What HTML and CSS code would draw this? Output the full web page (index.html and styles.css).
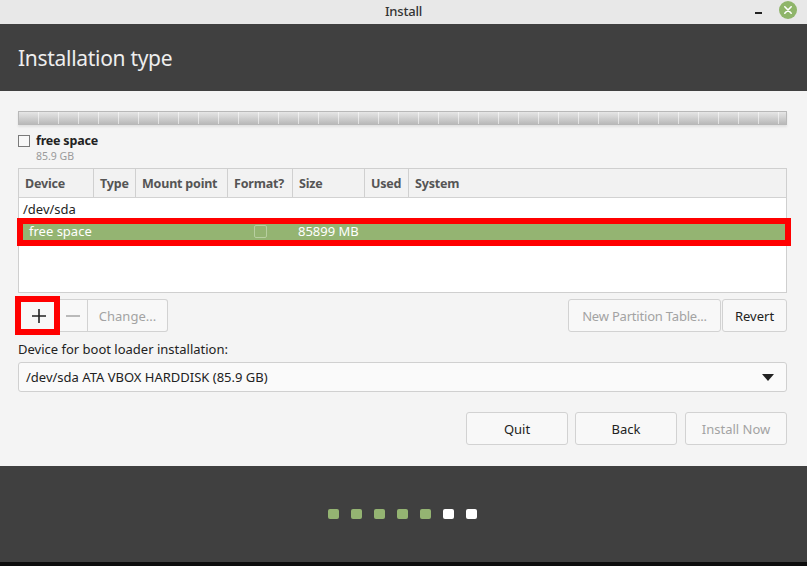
FILE: index.html
```html
<!DOCTYPE html>
<html>
<head>
<meta charset="utf-8">
<link rel="stylesheet" href="styles.css">
</head>
<body>
<div class="window">
  <div class="titlebar">
    <span class="title">Install</span>
    <div class="wm">
      <span class="minimize"></span>
      <span class="close">
        <svg width="18" height="18" viewBox="0 0 18 18"><circle cx="9" cy="9" r="9" fill="#8fb56a"/><path d="M5.8 5.8 L12.2 12.2 M12.2 5.8 L5.8 12.2" stroke="#fff" stroke-width="1.6" stroke-linecap="round"/></svg>
      </span>
    </div>
  </div>
  <div class="header"><h1>Installation type</h1></div>
  <div class="content">
    <div class="diskbar"></div>
    <div class="legend">
      <span class="legend-box"></span>
      <div class="legend-text">
        <div class="legend-name">free space</div>
        <div class="legend-size">85.9 GB</div>
      </div>
    </div>
    <div class="table">
      <div class="thead">
        <div class="th c1">Device</div>
        <div class="th c2">Type</div>
        <div class="th c3">Mount point</div>
        <div class="th c4">Format?</div>
        <div class="th c5">Size</div>
        <div class="th c6">Used</div>
        <div class="th c7">System</div>
      </div>
      <div class="row device-row"><span class="dev">/dev/sda</span></div>
      <div class="row part-row">
        <span class="part-name">free space</span>
        <span class="part-check"></span>
        <span class="part-size">85899 MB</span>
      </div>
      <div class="highlight row-hl"></div>
    </div>
    <div class="toolbar">
      <div class="group">
        <button class="btn icon-btn plus">
          <svg width="14" height="14" viewBox="0 0 14 14"><path d="M7 0 V14 M0 7 H14" stroke="#222" stroke-width="1.6"/></svg>
        </button>
        <button class="btn icon-btn minus">
          <svg width="14" height="14" viewBox="0 0 14 14"><path d="M0 7 H14" stroke="#aaa" stroke-width="1.6"/></svg>
        </button>
        <button class="btn change disabled">Change...</button>
        <div class="highlight plus-hl"></div>
      </div>
      <div class="group right">
        <button class="btn newtable disabled">New Partition Table...</button>
        <button class="btn revert">Revert</button>
      </div>
    </div>
    <div class="boot-label">Device for boot loader installation:</div>
    <div class="combo">
      <span>/dev/sda ATA VBOX HARDDISK (85.9 GB)</span>
      <svg width="12" height="7" viewBox="0 0 12 7"><path d="M0 0 H12 L6 7 Z" fill="#222"/></svg>
    </div>
    <div class="actions">
      <button class="btn action quit">Quit</button>
      <button class="btn action back">Back</button>
      <button class="btn action disabled">Install Now</button>
    </div>
  </div>
  <div class="footer">
    <span class="dot done"></span>
    <span class="dot done"></span>
    <span class="dot done"></span>
    <span class="dot done"></span>
    <span class="dot done"></span>
    <span class="dot"></span>
    <span class="dot"></span>
  </div>
  <div class="wallpaper"></div>
</div>
</body>
</html>
```

FILE: styles.css
```css
* { box-sizing: border-box; }
html, body { margin: 0; padding: 0; }
body {
  width: 807px;
  height: 566px;
  overflow: hidden;
  background: #000;
  font-family: "Noto Sans", "DejaVu Sans", sans-serif;
  font-size: 13px;
  color: #333;
}
.window { width: 807px; height: 566px; display: flex; flex-direction: column; }

.titlebar {
  height: 24px;
  background: #e8e8e8;
  position: relative;
  display: flex;
  align-items: center;
  justify-content: center;
  padding-bottom: 3px;
}
.title { font-size: 13px; font-weight: 500; color: #333; letter-spacing: -0.2px; }
.wm {
  position: absolute;
  right: 10px;
  top: 1px;
  display: flex;
  align-items: center;
  gap: 17px;
}
.minimize { width: 7px; height: 2px; background: #222; margin-top: 6px; }
.close { display: flex; }

.header {
  height: 67px;
  background: #404040;
  padding-left: 18px;
  display: flex;
  align-items: center;
}
.header h1 {
  margin: 0;
  font-size: 21px;
  font-weight: 400;
  color: #eeeeee;
  letter-spacing: -0.3px;
}

.content {
  height: 375px;
  background: #f4f4f4;
  padding: 20px 20px 0 18px;
  display: flex;
  flex-direction: column;
}

.diskbar {
  height: 14px;
  width: 769px;
  border: 1px solid #b8b8b8;
  background:
    repeating-linear-gradient(90deg, transparent 0 19px, rgba(255,255,255,0.55) 19px 20px),
    linear-gradient(#e6e6e6, #d2d2d2 45%, #b9b9b9 100%);
  box-shadow: 0 2px 2px rgba(0,0,0,0.08);
}

.legend { display: flex; gap: 6px; margin-top: 9px; height: 34px; }
.legend-box {
  width: 12px; height: 12px;
  border: 1px solid #7a7a7a;
  background: #f8f8f8;
  margin-top: 1px;
}
.legend-text { display: flex; flex-direction: column; }
.legend-name { font-weight: 700; font-size: 12.5px; color: #222; line-height: 14px; letter-spacing: -0.2px; }
.legend-size { font-size: 10.5px; color: #9a9a9a; line-height: 14px; margin-top: 1px; }

.table {
  position: relative;
  width: 769px;
  height: 125px;
  border: 1px solid #cfcfcf;
  background: #fff;
}
.thead {
  display: grid;
  grid-template-columns: 75px 42px 92px 65px 72px 44px 1fr;
  height: 29px;
  background: #f2f2f2;
  border-bottom: 1px solid #d2d2d2;
}
.th {
  font-weight: 700;
  font-size: 12.5px;
  color: #555;
  padding-left: 6px;
  display: flex;
  align-items: center;
  border-right: 1px solid #d0d0d0;
  letter-spacing: -0.2px;
}
.th.c7 { border-right: none; }
.row { display: flex; align-items: center; height: 23px; }
.device-row { padding-left: 4px; color: #222; padding-bottom: 2px; }
.part-row {
  height: 22px;
  background: #94b472;
  color: #fff;
  position: relative;
}
.part-name { position: absolute; left: 10px; top: 1px; }
.part-check {
  position: absolute; left: 235px; top: 4px;
  width: 13px; height: 13px;
  border: 1px solid #b8cfa0;
  border-radius: 2px;
}
.part-size { position: absolute; left: 279px; top: 1px; }

.highlight {
  position: absolute;
  border: 6px solid #ff0000;
  pointer-events: none;
}
.row-hl { left: -2px; top: 49px; width: 774px; height: 28px; }

.toolbar {
  display: flex;
  justify-content: space-between;
  margin-top: 6px;
  height: 33px;
}
.group { display: flex; position: relative; }
.btn {
  font-family: inherit;
  font-size: 13px;
  color: #222;
  background: #f8f8f8;
  border: 1px solid #d2d2d2;
  border-radius: 3px;
  height: 33px;
  padding: 0 12px;
  display: flex;
  align-items: center;
  justify-content: center;
  white-space: nowrap;
}
.btn.disabled { color: #a3a3a3; }
.group .btn { border-radius: 0; }
.group .btn + .btn { border-left: none; }
.group .btn:first-child { border-radius: 3px 0 0 3px; }
.group .btn:last-of-type { border-radius: 0 3px 3px 0; }
.icon-btn { padding: 0; }
.plus { width: 41px; }
.minus { width: 29px; }
.change { width: 80px; }
.plus-hl { left: -3px; top: -3px; width: 45px; height: 39px; }
.newtable { width: 153px; padding: 0; letter-spacing: -0.2px; }
.revert { width: 65px; }
.group.right .btn:first-child { border-radius: 3px; }
.group.right .btn:last-of-type { border-radius: 3px; border-left: 1px solid #d2d2d2; margin-left: 1px; }

.boot-label { margin-top: 9px; color: #222; line-height: 16px; }
.combo {
  margin-top: 5px;
  height: 30px;
  width: 769px;
  border: 1px solid #d0d0d0;
  border-radius: 3px;
  background: #fafafa;
  display: flex;
  align-items: center;
  justify-content: space-between;
  padding: 0 12px 0 7px;
  color: #222;
}

.actions {
  display: flex;
  justify-content: flex-end;
  margin-top: 20px;
}
.action { width: 102px; padding: 0; }
.quit { margin-right: 7px; }
.back { margin-right: 8px; }

.footer {
  height: 96px;
  background: #404040;
  display: flex;
  align-items: center;
  justify-content: center;
  gap: 12px;
  padding-right: 2px;
}
.dot {
  width: 11px; height: 10px;
  border-radius: 2px;
  background: #fff;
}
.dot.done { background: #94b472; }
.wallpaper { height: 4px; background: #0d0d0d; }
```
